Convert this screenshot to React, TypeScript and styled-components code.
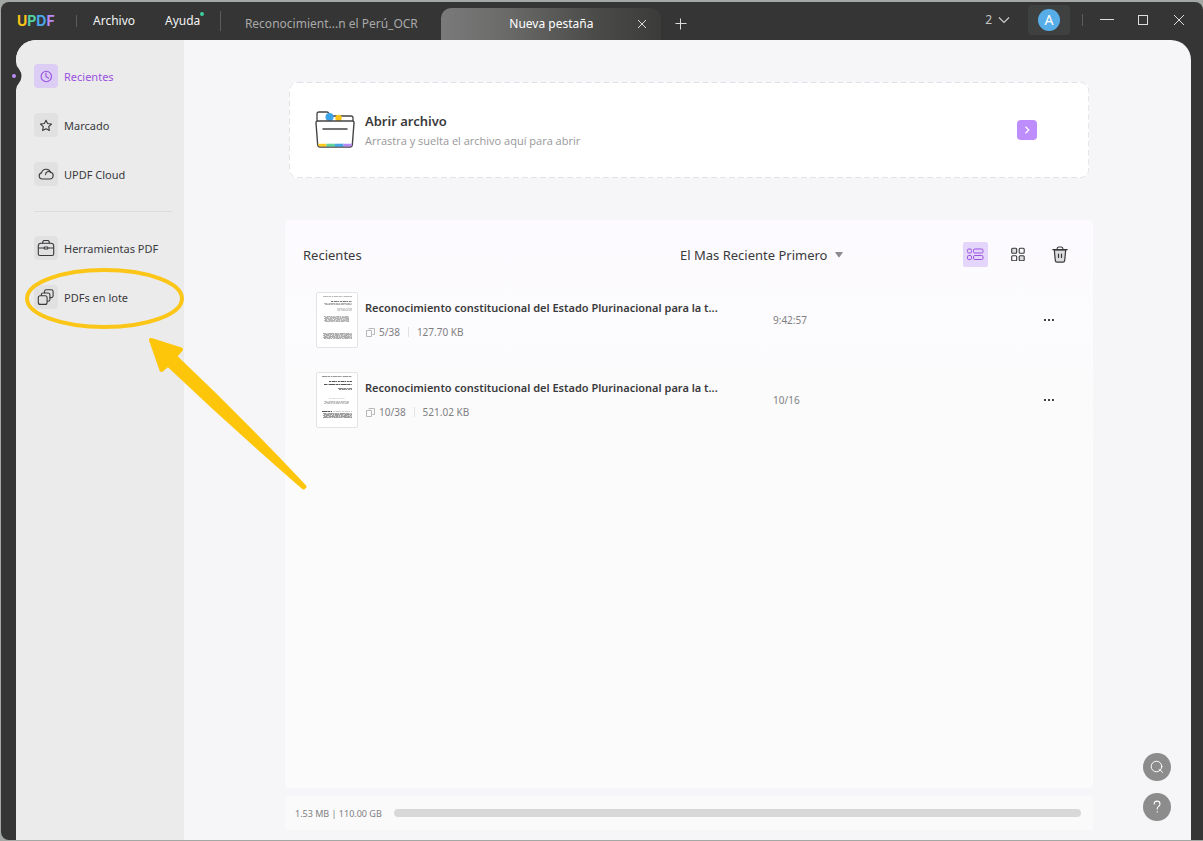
import React from "react";
import styled, { createGlobalStyle, css } from "styled-components";

const Global = createGlobalStyle`
  *, *::before, *::after { box-sizing: border-box; }
  body {
    margin: 0;
    background: #a3a8a5;
    font-family: "Noto Sans", "Open Sans", sans-serif;
    font-size: 11px;
    color: #3a3a3c;
  }
  button, select { font: inherit; color: inherit; }
  h1, h2, h3, p, ul { margin: 0; padding: 0; font-weight: 400; }
  ul { list-style: none; }
`;

const plainButton = css`
  display: inline-flex;
  align-items: center;
  justify-content: center;
  padding: 0;
  border: 0;
  background: transparent;
  cursor: pointer;
`;

const Screen = styled.div`
  display: flex;
  min-height: 100vh;
  padding: 2px 0 1px 1px;
`;

const AppWindow = styled.div`
  position: relative;
  flex: 1;
  min-width: 0;
  display: flex;
  flex-direction: column;
  background: #353535;
  border-radius: 8px 8px 0 8px;
`;

const TitleBar = styled.header`
  display: flex;
  height: 38px;
  padding-left: 16px;
  color: #f4f4f4;
`;

const Logo = styled.span`
  display: flex;
  align-self: center;
  font-family: Inter, sans-serif;
  font-weight: 700;
  font-size: 14px;
  line-height: 16px;
  width: 59px;
`;

const LogoLetter = styled.span<{ $color: string }>`
  color: ${(p) => p.$color};
`;

const Divider = styled.span<{ $height: number }>`
  width: 1px;
  height: ${(p) => p.$height}px;
  align-self: center;
  background: #5c5c5c;
`;

const Menu = styled.nav`
  display: flex;
  align-items: center;
  gap: 30px;
  padding: 0 20px 0 16px;
`;

const MenuButton = styled.button`
  ${plainButton}
  position: relative;
  font-size: 12px;
  line-height: 18px;
`;

const NewsDot = styled.span`
  position: absolute;
  top: 0;
  right: -4px;
  width: 4px;
  height: 4px;
  border-radius: 50%;
  background: #3ecf9b;
`;

const Tabs = styled.div`
  display: flex;
  align-items: flex-end;
  flex: 1;
  min-width: 0;
`;

const Tab = styled.div<{ $active?: boolean }>`
  position: relative;
  display: flex;
  align-items: center;
  justify-content: center;
  width: 220px;
  height: 32px;
  border-radius: 10px 10px 0 0;
  color: ${(p) => (p.$active ? "#fff" : "#a9a9a9")};
  background: ${(p) =>
    p.$active
      ? "linear-gradient(90deg, #7a7a7a 0%, #6a6a69 30%, #4b4b4a 70%, #3b3b3a 100%)"
      : "transparent"};
`;

const TabLabel = styled.button`
  ${plainButton}
  font-size: 12px;
  line-height: 18px;
  white-space: nowrap;
`;

const TabClose = styled.button`
  ${plainButton}
  position: absolute;
  right: 12px;
  top: 9px;
  width: 14px;
  height: 14px;
`;

const NewTab = styled.button`
  ${plainButton}
  width: 40px;
  height: 32px;
`;

const WindowControls = styled.div`
  display: flex;
  align-items: center;
  height: 36px;
  padding-right: 6px;
`;

const ControlGroup = styled.div`
  display: flex;
  margin-left: 6px;
`;

const TabCount = styled.button`
  ${plainButton}
  gap: 6px;
  margin-right: 18px;
  font-size: 12px;
  line-height: 18px;
  color: #c4c4c4;
`;

const Account = styled.button`
  ${plainButton}
  width: 42px;
  height: 30px;
  margin-right: 12px;
  border-radius: 4px;
  background: #3f4040;
`;

const Avatar = styled.span`
  width: 22px;
  height: 22px;
  border-radius: 50%;
  background: #56ade8;
  color: #fff;
  font-size: 14px;
  line-height: 22px;
  text-align: center;
`;

const ControlButton = styled.button`
  ${plainButton}
  width: 36px;
  height: 30px;
`;

const Body = styled.div`
  position: relative;
  display: flex;
  flex: 1;
  margin: 0 12px 0 15px;
  border-radius: 20px 20px 0 0;
  background: #f6f5f8;
`;

const Sidebar = styled.aside`
  width: 168px;
  padding: 24px 12px 24px 18px;
  border-radius: 20px 0 0 0;
  background: #ebebec;
`;

const Notch = styled.svg`
  position: absolute;
  left: -5px;
  top: 20px;
`;

const NavList = styled.ul`
  display: flex;
  flex-direction: column;
  gap: 25px;
  & + & {
    margin-top: 25px;
    padding-top: 24px;
    border-top: 1px solid #dcdcde;
  }
`;

const NavLink = styled.a<{ $active?: boolean }>`
  display: flex;
  align-items: center;
  gap: 6px;
  color: ${(p) => (p.$active ? "#9a52e0" : "#3a3a3c")};
  text-decoration: none;
  white-space: nowrap;
`;

const NavLabel = styled.span`
  padding-top: 2px;
  line-height: 16px;
`;

const NavIcon = styled.span<{ $active?: boolean }>`
  display: flex;
  align-items: center;
  justify-content: center;
  width: 24px;
  height: 24px;
  border-radius: 4px;
  background: ${(p) => (p.$active ? "#dccdf5" : "#e1e1e2")};
`;

const Main = styled.main`
  display: flex;
  flex: 1;
  min-width: 0;
  flex-direction: column;
  padding: 42px 98px 10px 101px;
`;

const DropZone = styled.section`
  position: relative;
  display: flex;
  align-items: center;
  height: 96px;
  margin: 0 4px 42px;
  padding: 0 52px 0 26px;
  border-radius: 8px;
  background: #fff;
`;

const DashedFrame = styled.svg`
  position: absolute;
  inset: 0;
  width: 100%;
  height: 100%;
  pointer-events: none;
`;

const DropText = styled.div`
  flex: 1;
  margin-left: 10px;
  padding-top: 2px;
`;

const DropTitle = styled.h1`
  font-size: 13px;
  font-weight: 600;
  line-height: 20px;
`;

const DropHint = styled.p`
  font-family: "Open Sans", sans-serif;
  font-size: 11px;
  line-height: 20px;
  color: #98989a;
`;

const OpenButton = styled.button`
  ${plainButton}
  width: 20px;
  height: 20px;
  border-radius: 4px;
  background: #be8dfc;
`;

const Panel = styled.section`
  flex: 1;
  padding: 20px 18px;
  border-radius: 4px;
  background: linear-gradient(#fcfafe, #fbfbfb 40%, #fbfbfb);
`;

const PanelHead = styled.div`
  display: grid;
  grid-template-columns: minmax(0, 1fr) 283px 112px;
  align-items: center;
  height: 30px;
`;

const PanelTitle = styled.h2`
  font-size: 13px;
  line-height: 20px;
`;

const Sort = styled.label`
  display: flex;
  align-items: center;
  gap: 7px;
`;

const SortSelect = styled.select`
  appearance: none;
  field-sizing: content;
  padding: 0;
  border: 0;
  background: transparent;
  font-size: 13px;
  line-height: 20px;
`;

const ViewTools = styled.div`
  display: flex;
  align-items: center;
  gap: 17px;
  padding-bottom: 2px;
`;

const ToolButton = styled.button<{ $active?: boolean }>`
  ${plainButton}
  width: 25px;
  height: 25px;
  border-radius: 2px;
  background: ${(p) => (p.$active ? "#e4d6fb" : "transparent")};
`;

const FileList = styled.ul`
  display: flex;
  flex-direction: column;
  gap: 24px;
  margin-top: 22px;
`;

const FileRow = styled.li`
  display: grid;
  grid-template-columns: 42px minmax(0, 1fr) 264px 24px;
  align-items: center;
  height: 56px;
  padding: 0 14px 0 13px;
`;

const Thumb = styled.span`
  display: block;
  width: 42px;
  height: 56px;
  border: 1px solid #e4e4e6;
  border-radius: 2px;
  background: #fff;
`;

const FileInfo = styled.div`
  display: flex;
  flex-direction: column;
  gap: 6px;
  padding-left: 7px;
`;

const FileName = styled.h3`
  font-size: 11px;
  font-weight: 600;
  line-height: 18px;
  white-space: nowrap;
`;

const FileMeta = styled.p`
  display: flex;
  align-items: center;
  padding-left: 1px;
  font-size: 10px;
  line-height: 18px;
  color: #808082;
`;

const PageCount = styled.span`
  margin-left: 4px;
`;

const MetaRule = styled.span`
  width: 1px;
  height: 10px;
  margin: 0 8px;
  background: #e2e2e4;
`;

const FileTime = styled.time`
  font-size: 10px;
  line-height: 18px;
  color: #808082;
`;

const MoreButton = styled.button`
  ${plainButton}
  width: 24px;
  height: 24px;
`;

const Storage = styled.footer`
  display: flex;
  align-items: center;
  gap: 12px;
  height: 34px;
  margin-top: 8px;
  padding: 0 12px 0 10px;
  border-radius: 4px;
  background: #fafafb;
  font-size: 9px;
  color: #808082;
  white-space: nowrap;
`;

const StorageTrack = styled.div`
  flex: 1;
  height: 8px;
  border-radius: 4px;
  background: #d8d8d8;
`;

const FloatingTools = styled.div`
  position: absolute;
  right: 20px;
  bottom: 19px;
  display: flex;
  flex-direction: column;
  gap: 12px;
`;

const RoundButton = styled.button`
  ${plainButton}
  width: 28px;
  height: 28px;
  border-radius: 50%;
  background: #8c8c8c;
`;

const Annotation = styled.svg`
  position: absolute;
  left: 0;
  top: 0;
  pointer-events: none;
`;

const line = {
  fill: "none",
  stroke: "currentColor",
  strokeWidth: 1.1,
  strokeLinecap: "round" as const,
  strokeLinejoin: "round" as const,
};

const ClockIcon = () => (
  <svg width="18" height="18" viewBox="0 0 18 18" {...line}>
    <circle cx="9.3" cy="9.5" r="5.2" />
    <path d="M9 6v3.8l2.600 1.300" />
  </svg>
);

const StarIcon = () => (
  <svg width="18" height="18" viewBox="0 0 18 18" {...line}>
    <path d="M9 4.200l1.600 3.300 3.900.5-2.800 2.700.7 3.800L9 12.700l-3.400 1.800.7-3.800L3.500 8l3.900-.5z" />
  </svg>
);

const CloudIcon = () => (
  <svg width="18" height="18" viewBox="0 0 18 18" {...line}>
    <path d="M5.300 14a3.100 3.100 0 01-.8-6.100A4.800 4.800 0 0113.600 7.300a3.400 3.400 0 01-.8 6.700z" />
    <path d="M8.600 9.600a3 3 0 015-2.300" />
  </svg>
);

const CaseIcon = () => (
  <svg width="18" height="18" viewBox="0 0 18 18" {...line}>
    <path d="M5.500 4.200l.5-1.700Q6.200 1.500 7.200 1.500h3.600q1 0 1.200 1l.5 1.700" />
    <path d="M1.300 9V7q0-2.800 2.800-2.800h9.800q2.800 0 2.800 2.800v8q0 1.500-1.500 1.500H2.800q-1.500 0-1.500-1.500V9h5.700M16.700 9H11" />
    <rect x="7.200" y="8" width="3.600" height="2" rx=".4" />
  </svg>
);

const BatchIcon = () => (
  <svg width="18" height="18" viewBox="0 0 18 18" {...line}>
    <rect x="1.300" y="7.800" width="8.800" height="8.600" rx="2" />
    <path d="M4.300 7.500V6.800q0-1.800 1.800-1.800h5q1.800 0 1.800 1.800v4.700q0 1.800-1.800 1.800h-.7" />
    <path d="M7.500 4.700V3.600q0-1.800 1.800-1.800h5q1.800 0 1.800 1.800v4.200q0 1.800-1.800 1.800h-1" />
  </svg>
);

const FolderIcon = () => (
  <svg width="40" height="38" viewBox="0 0 40 38" fill="none" strokeLinejoin="round">
    <path d="M2 11V3q0-2 2-2h8q1.200 0 2 1.500L16 5h20q2 0 2 2v4" stroke="#444" strokeWidth="1.300" fill="#fff" />
    <circle cx="14.500" cy="6" r="4" fill="#3ba3e6" />
    <circle cx="23.500" cy="7" r="3.200" fill="#fcc419" />
    <path d="M3 10h34q2.300 0 2 2l-1.700 22q-.2 2-2 2H4.700q-1.800 0-2-2L1 12q-.3-2 2-2z" fill="#fff" stroke="#444" strokeWidth="1.400" />
    <path d="M3 32.700h8.500v2.800H4.800q-1.400 0-1.800-2.800z" fill="#fccb1d" />
    <path d="M11.500 32.700H20v2.800h-8.500z" fill="#5fd39b" />
    <path d="M20 32.700h8.500v2.800H20z" fill="#45a5e6" />
    <path d="M28.500 32.700h8.600q-.2 2.800-1.800 2.800h-6.800z" fill="#b78af5" />
    <path d="M8 18h24" stroke="#444" strokeWidth="1.500" strokeLinecap="round" />
  </svg>
);

const CopyIcon = () => (
  <svg width="9" height="10" viewBox="0 0 9 10" fill="none" stroke="#b8b8ba">
    <path d="M3 2.500V1.500h5.500v6H6.500M.5 3.500h5v6h-5z" />
  </svg>
);

const ListViewIcon = () => (
  <svg width="17" height="13" viewBox="0 0 17 13" fill="none" stroke="#9a52e0">
    <rect x=".5" y="1" width="4" height="4" rx="1.300" />
    <rect x="6.500" y="1" width="9.500" height="4" rx="1.300" />
    <rect x=".5" y="7.500" width="4" height="4" rx="1.300" />
    <rect x="6.500" y="7.500" width="9.500" height="4" rx="1.300" />
  </svg>
);

const GridViewIcon = () => (
  <svg width="14" height="14" viewBox="0 0 14 14" fill="none" stroke="#38383a" strokeWidth="1.100">
    <rect x=".7" y="1.200" width="5" height="5" rx="1" fill="#dcdcde" />
    <rect x="8.200" y="1.200" width="5" height="5" rx="1" />
    <rect x=".7" y="8.700" width="5" height="5" rx="1" />
    <rect x="8.200" y="8.700" width="5" height="5" rx="1" fill="#dcdcde" />
  </svg>
);

const TrashIcon = () => (
  <svg width="16" height="17" viewBox="0 0 16 17" fill="none" stroke="#38383a" strokeWidth="1.200" strokeLinecap="round">
    <path d="M2.300 3.800l1 10.600q.2 1.700 1.700 1.700h6q1.500 0 1.700-1.700l1-10.600z" fill="#dcdcde" />
    <path d="M.8 3.600h14.400M5 3.300Q5.200 1 6.500 1h3q1.300 0 1.500 2.300" />
    <path d="M6.500 8v3.500M9.500 8v3.500" />
  </svg>
);

/* Miniature page: each entry is one run of tiny print [x, y, width, height, shade]. */
type Print = [number, number, number, number, string];

const dashes = ["5 .4 3 .6 1 .5", "2 .7 4 .4 1 .8", "3 .5 1 .6 6 .5"];

const PageThumb = ({ prints }: { prints: Print[] }) => (
  <Thumb>
    <svg width="40" height="54" viewBox="0 0 40 54">
      {prints.map(([x, y, w, h, color], i) => (
        <g key={i} stroke={color}>
          {Array.from({ length: h }, (_, r) => (
            <path
              key={r}
              d={`M${x + (r % 2)} ${y + r + 0.5}h${w - (r % 2)}`}
              strokeDasharray={dashes[(r + i) % 3]}
            />
          ))}
        </g>
      ))}
    </svg>
  </Thumb>
);

const files: { name: string; pages: string; size: string; time: string; prints: Print[] }[] = [
  {
    name: "Reconocimiento constitucional del Estado Plurinacional para la t...",
    pages: "5/38",
    size: "127.70 KB",
    time: "9:42:57",
    prints: [
      [6, 3, 29, 1, "#bbb"],
      [14, 8, 21, 1, "#777"],
      [7, 10, 28, 2, "#b5b5b5"],
      [20, 15, 15, 3, "#d0d0d0"],
      [7, 23, 25, 6, "#b4b4b4"],
      [6, 40, 29, 6, "#acacac"],
    ],
  },
  {
    name: "Reconocimiento constitucional del Estado Plurinacional para la t...",
    pages: "10/38",
    size: "521.02 KB",
    time: "10/16",
    prints: [
      [5, 3, 30, 1, "#999"],
      [12, 8, 23, 1, "#555"],
      [7, 11, 28, 1, "#555"],
      [21, 15, 14, 2, "#888"],
      [12, 25, 16, 1, "#ddd"],
      [7, 28, 25, 3, "#c4c4c4"],
      [5, 38, 10, 1, "#555"],
      [16, 38, 19, 1, "#ccc"],
      [6, 40, 29, 5, "#9c9c9c"],
    ],
  },
];

export default function App() {
  return (
    <Screen>
      <Global />
      <AppWindow>
        <TitleBar>
          <Logo>
            <LogoLetter $color="#fcc419">U</LogoLetter>
            <LogoLetter $color="#50d2a0">P</LogoLetter>
            <LogoLetter $color="#4aa8ea">D</LogoLetter>
            <LogoLetter $color="#bb8cf8">F</LogoLetter>
          </Logo>
          <Divider $height={12} />
          <Menu>
            <MenuButton type="button">Archivo</MenuButton>
            <MenuButton type="button">
              Ayuda
              <NewsDot />
            </MenuButton>
          </Menu>
          <Divider $height={20} />
          <Tabs>
            <Tab>
              <TabLabel type="button">Reconocimient...n el Perú_OCR</TabLabel>
            </Tab>
            <Tab $active>
              <TabLabel type="button">Nueva pestaña</TabLabel>
              <TabClose type="button" aria-label="Cerrar pestaña">
                <svg width="10" height="10" viewBox="0 0 10 10" stroke="#ddd">
                  <path d="M1 1l8 8M9 1L1 9" />
                </svg>
              </TabClose>
            </Tab>
            <NewTab type="button" aria-label="Nueva pestaña">
              <svg width="12" height="12" viewBox="0 0 12 12" stroke="#ddd">
                <path d="M.5 5.500h11M5.500 .5v11" />
              </svg>
            </NewTab>
          </Tabs>
          <WindowControls>
            <TabCount type="button">
              2
              <svg width="12" height="8" viewBox="0 0 12 8" fill="none" stroke="#ccc" strokeWidth="1.200">
                <path d="M1 1.500l5 5 5-5" />
              </svg>
            </TabCount>
            <Account type="button" aria-label="Cuenta">
              <Avatar>A</Avatar>
            </Account>
            <Divider $height={12} />
            <ControlGroup>
              <ControlButton type="button" aria-label="Minimizar">
                <svg width="14" height="12" viewBox="0 0 14 12" stroke="#ddd">
                  <path d="M0 5.500h14" />
                </svg>
              </ControlButton>
              <ControlButton type="button" aria-label="Maximizar">
                <svg width="10" height="10" viewBox="0 0 10 10" fill="none" stroke="#ddd">
                  <rect x=".5" y=".5" width="9" height="9" />
                </svg>
              </ControlButton>
              <ControlButton type="button" aria-label="Cerrar">
                <svg width="12" height="12" viewBox="0 0 12 12" stroke="#ddd">
                  <path d="M1 1l10 10M11 1L1 11" />
                </svg>
              </ControlButton>
            </ControlGroup>
          </WindowControls>
        </TitleBar>
        <Body>
          <Sidebar>
            <NavList>
              <li>
                <NavLink href="#recientes" $active>
                  <NavIcon $active><ClockIcon /></NavIcon>
                  <NavLabel>Recientes</NavLabel>
                </NavLink>
              </li>
              <li>
                <NavLink href="#marcado">
                  <NavIcon><StarIcon /></NavIcon>
                  <NavLabel>Marcado</NavLabel>
                </NavLink>
              </li>
              <li>
                <NavLink href="#cloud">
                  <NavIcon><CloudIcon /></NavIcon>
                  <NavLabel>UPDF Cloud</NavLabel>
                </NavLink>
              </li>
            </NavList>
            <NavList>
              <li>
                <NavLink href="#herramientas">
                  <NavIcon><CaseIcon /></NavIcon>
                  <NavLabel>Herramientas PDF</NavLabel>
                </NavLink>
              </li>
              <li>
                <NavLink href="#lote">
                  <NavIcon><BatchIcon /></NavIcon>
                  <NavLabel>PDFs en lote</NavLabel>
                </NavLink>
              </li>
            </NavList>
          </Sidebar>
          <Notch width="12" height="32" viewBox="0 0 12 32">
            <path d="M4 2h1q0 4 3 7 5 7 0 14-3 3-3 7H4z" fill="#353535" />
            <circle cx="3" cy="16" r="2" fill="#bb8cf8" />
          </Notch>
          <Main>
            <DropZone>
              <DashedFrame>
                <rect x="0.500" y="0.500" width="99.900%" height="95" rx="8" fill="none" stroke="#e3e0e6" strokeDasharray="6 3" />
              </DashedFrame>
              <FolderIcon />
              <DropText>
                <DropTitle>Abrir archivo</DropTitle>
                <DropHint>Arrastra y suelta el archivo aquí para abrir</DropHint>
              </DropText>
              <OpenButton type="button" aria-label="Abrir archivo">
                <svg width="6" height="8" viewBox="0 0 6 8" fill="none" stroke="#fff" strokeWidth="1.200">
                  <path d="M1.500 .8L4.800 4 1.500 7.200" />
                </svg>
              </OpenButton>
            </DropZone>
            <Panel>
              <PanelHead>
                <PanelTitle>Recientes</PanelTitle>
                <Sort>
                  <SortSelect aria-label="Ordenar">
                    <option>El Mas Reciente Primero</option>
                  </SortSelect>
                  <svg width="8" height="6" viewBox="0 0 8 6">
                    <path d="M.8 0h6.400q.8 0 .4.800L4.600 5q-.6.600-1.200 0L.4.800Q0 0 .8 0z" fill="#8c8c8e" />
                  </svg>
                </Sort>
                <ViewTools>
                  <ToolButton type="button" $active aria-label="Vista de lista"><ListViewIcon /></ToolButton>
                  <ToolButton type="button" aria-label="Vista de cuadrícula"><GridViewIcon /></ToolButton>
                  <ToolButton type="button" aria-label="Vaciar"><TrashIcon /></ToolButton>
                </ViewTools>
              </PanelHead>
              <FileList>
                {files.map((file) => (
                  <FileRow key={file.pages}>
                    <PageThumb prints={file.prints} />
                    <FileInfo>
                      <FileName>{file.name}</FileName>
                      <FileMeta>
                        <CopyIcon />
                        <PageCount>{file.pages}</PageCount>
                        <MetaRule />
                        <span>{file.size}</span>
                      </FileMeta>
                    </FileInfo>
                    <FileTime>{file.time}</FileTime>
                    <MoreButton type="button" aria-label="Más opciones">
                      <svg width="11" height="2" viewBox="0 0 11 2" fill="#444">
                        <rect width="2" height="2" />
                        <rect x="4" width="2" height="2" />
                        <rect x="8" width="2" height="2" />
                      </svg>
                    </MoreButton>
                  </FileRow>
                ))}
              </FileList>
            </Panel>
            <Storage>
              <span>1.53 MB | 110.00 GB</span>
              <StorageTrack />
            </Storage>
          </Main>
          <FloatingTools>
            <RoundButton type="button" aria-label="Buscar">
              <svg width="14" height="14" viewBox="0 0 14 14" fill="none" stroke="#fff" strokeLinecap="round">
                <circle cx="6.500" cy="6.500" r="5.300" />
                <path d="M9 9.500q1.800.3 3.500 2.800" />
              </svg>
            </RoundButton>
            <RoundButton type="button" aria-label="Ayuda">
              <svg width="8" height="14" viewBox="0 0 8 14" fill="none" stroke="#fff" strokeWidth="1.100">
                <path d="M1.200 4.500V4a2.900 2.900 0 015.800 0c0 2.300-2.800 2.600-2.800 4.800v.7M4.200 11.200v1.300" />
              </svg>
            </RoundButton>
          </FloatingTools>
        </Body>
        <Annotation width="320" height="500" viewBox="1 2 320 500">
          <ellipse cx="104.500" cy="298.500" rx="77.500" ry="28.500" fill="none" stroke="#fbc618" strokeWidth="4" />
          <path
            d="M151 340L181 349.500 175 356.500Q240 418 304.500 486.500L303.500 487.500Q236 429 168 364.500L161.500 370z"
            fill="#fdc60b"
            stroke="#fdc60b"
            strokeWidth="4"
            strokeLinejoin="round"
          />
        </Annotation>
      </AppWindow>
    </Screen>
  );
}
